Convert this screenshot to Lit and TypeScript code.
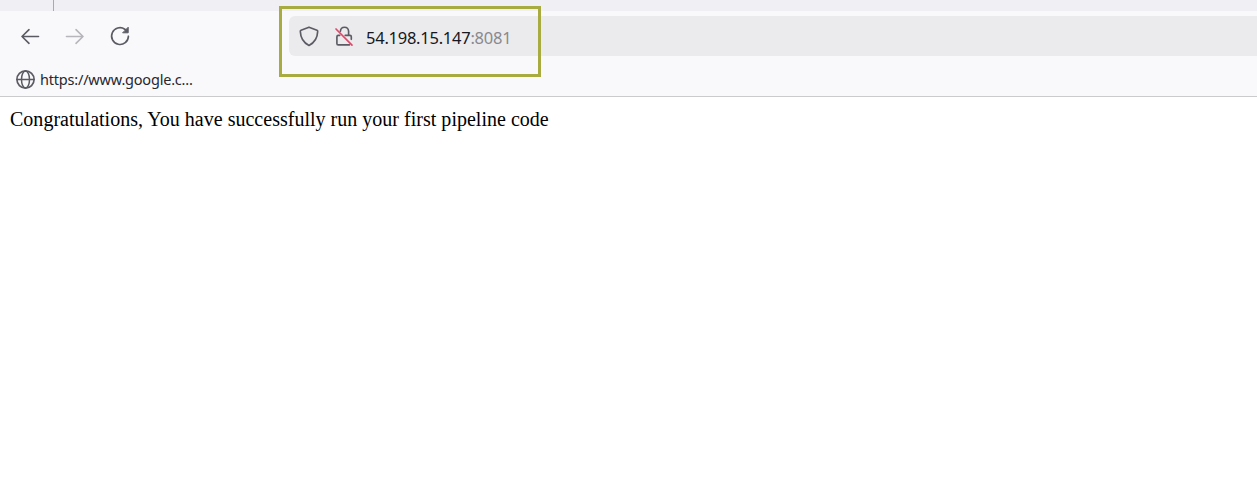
import { LitElement, html, css } from "lit";
import { customElement } from "lit/decorators.js";

@customElement("app-root")
export class AppRoot extends LitElement {
  static styles = css`
    :host { display: block; position: relative; height: 492px; overflow: hidden; background: #fff; }
    svg { display: block; fill: none; stroke: #5b5b64; stroke-width: 1.65; stroke-linecap: round; stroke-linejoin: round; flex: none; }
    .tabs { display: flex; height: 11px; background: #f0f0f4; }
    .tab { width: 53px; border-right: 1px solid #a9a9ae; }
    .chrome { background: #f9f9fb; height: 85px; border-bottom: 1px solid #cbcbce; }
    .nav { display: flex; align-items: center; height: 50px; }
    .buttons { display: flex; gap: 21px; padding-left: 18px; width: 271px; }
    .disabled { stroke: #b6b6bb; }
    .url { flex: 1; display: flex; align-items: center; height: 40px; background: #ebebed; border-radius: 6px 0 0 6px; padding-left: 8px; }
    .lock { margin-left: 11px; }
    .slash { stroke: #df4668; }
    .address { margin-left: 10px; padding-top: 3px; font: 16.5px/22px "Noto Sans", sans-serif; letter-spacing: -0.25px; color: #17171f; white-space: nowrap; }
    .port { color: #89898f; }
    .bookmarks { display: flex; align-items: center; height: 37px; padding-left: 15px; font: 14.5px/20px "Noto Sans", sans-serif; color: #27272f; }
    .label { margin-left: 4px; padding-bottom: 2px; letter-spacing: -0.2px; white-space: nowrap; }
    .page { padding: 10px 0 0 10px; font: 20px/24px "Liberation Serif", serif; letter-spacing: 0.016px; color: #000; white-space: nowrap; }
    .highlight { position: absolute; left: 279px; top: 6px; width: 262px; height: 71px; box-sizing: border-box; border: 3px solid #a8ab40; }
  `;

  render() {
    return html`
      <div class="tabs"><div class="tab"></div></div>
      <div class="chrome">
        <div class="nav">
          <div class="buttons">
            <svg width="24" height="24" viewBox="0 0 24 24"><path d="M20.5 12.5H4M11 5.7L4 12.5l7 6.8" /></svg>
            <svg class="disabled" width="24" height="24" viewBox="0 0 24 24"><path d="M3.5 12.5H20M13 5.7l7 6.8-7 6.8" /></svg>
            <svg width="24" height="24" viewBox="0 0 24 24"><path d="M20.4 12.2A8.4 8.4 0 1 1 16.8 5.2L19 7" /><path d="M20.2 3.6v5.2h-5.2z" fill="#5b5b64" stroke-width="1" /></svg>
          </div>
          <div class="url">
            <svg width="24" height="24" viewBox="0 0 24 24"><path d="M12 3.2L20 6.2Q20.8 6.5 20.7 7.4C20.4 14.5 17.7 18.7 12 21.4C6.3 18.7 3.6 14.5 3.3 7.4Q3.2 6.5 4 6.2Z" /></svg>
            <svg class="lock" width="24" height="24" viewBox="0 0 24 24">
              <path d="M8.4 7.3C8.8 1.9 16.2 1.9 16.6 7.3V11.4H18Q19.3 11.4 19.3 12.8V15.3M13.2 11.4H16.6M7.7 11.4H6.2Q4.9 11.4 4.9 12.8V19.5Q4.9 20.9 6.2 20.9H17.4" />
              <path class="slash" d="M4 5L20 21.2" />
            </svg>
            <div class="address">54.198.15.147<span class="port">:8081</span></div>
          </div>
        </div>
        <div class="bookmarks">
          <svg width="21" height="21" viewBox="0 0 21 21"><circle cx="10.5" cy="10.5" r="8.6" /><ellipse cx="10.5" cy="10.5" rx="4" ry="8.6" stroke-width="1.5" /><path d="M2 10.5h17" stroke-width="1.5" /></svg>
          <span class="label">https://www.google.c...</span>
        </div>
      </div>
      <div class="page">Congratulations, You have successfully run your first pipeline code</div>
      <div class="highlight"></div>
    `;
  }
}
